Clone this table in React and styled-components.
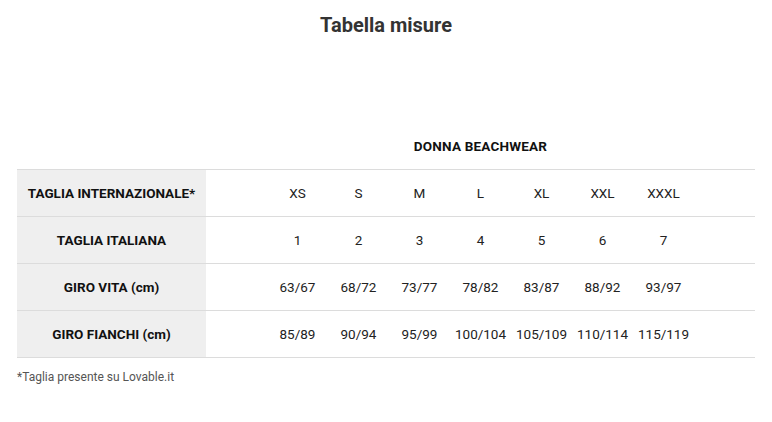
import React from "react";
import styled, { createGlobalStyle } from "styled-components";

const Global = createGlobalStyle`
  html, body { margin: 0; padding: 0; background: #fff; }
  body { font-family: Roboto, "Noto Sans", sans-serif; color: #222; }
`;

const Page = styled.div`
  width: 772px;
  height: 422px;
  padding: 0 17px;
  box-sizing: border-box;
`;

const Title = styled.h1`
  margin: 0;
  padding-top: 12px;
  font-size: 20px;
  line-height: 26px;
  font-weight: 700;
  color: #333;
  text-align: center;
`;

const Table = styled.table`
  margin-top: 82px;
  width: 738px;
  border-collapse: collapse;
  table-layout: fixed;
`;

const Caption = styled.th`
  font-size: 13.5px;
  font-weight: 700;
  letter-spacing: 0.2px;
  text-align: center;
  height: 34px;
  padding: 0 0 15px;
  vertical-align: bottom;
  color: #111;
`;

const Row = styled.tr`
  border-top: 1px solid #dcdcdc;
  border-bottom: 1px solid #dcdcdc;
  height: 47px;
`;

const HeadCell = styled.th`
  width: 189px;
  background: #efefef;
  font-size: 13.5px;
  font-weight: 700;
  text-align: center;
  color: #111;
  padding: 0 0 1px;
`;

const Cell = styled.td`
  width: 61px;
  text-align: center;
  font-size: 13.5px;
  color: #222;
  padding: 0;
`;

const Note = styled.p`
  margin: 12px 0 0;
  font-size: 12px;
  color: #555;
`;

const rows = [
  { label: "TAGLIA INTERNAZIONALE*", values: ["XS", "S", "M", "L", "XL", "XXL", "XXXL"] },
  { label: "TAGLIA ITALIANA", values: ["1", "2", "3", "4", "5", "6", "7"] },
  { label: "GIRO VITA (cm)", values: ["63/67", "68/72", "73/77", "78/82", "83/87", "88/92", "93/97"] },
  { label: "GIRO FIANCHI (cm)", values: ["85/89", "90/94", "95/99", "100/104", "105/109", "110/114", "115/119"] },
];

export default function App() {
  return (
    <Page>
      <Global />
      <Title>Tabella misure</Title>
      <Table>
        <colgroup>
          <col style={{ width: 189 }} />
          {Array.from({ length: 9 }).map((_, i) => (
            <col key={i} style={{ width: 61 }} />
          ))}
        </colgroup>
        <thead>
          <tr>
            <th />
            <Caption colSpan={9}>DONNA BEACHWEAR</Caption>
          </tr>
        </thead>
        <tbody>
          {rows.map((r) => (
            <Row key={r.label}>
              <HeadCell>{r.label}</HeadCell>
              <Cell />
              {r.values.map((v) => (
                <Cell key={v}>{v}</Cell>
              ))}
              <Cell />
            </Row>
          ))}
        </tbody>
      </Table>
      <Note>*Taglia presente su Lovable.it</Note>
    </Page>
  );
}
